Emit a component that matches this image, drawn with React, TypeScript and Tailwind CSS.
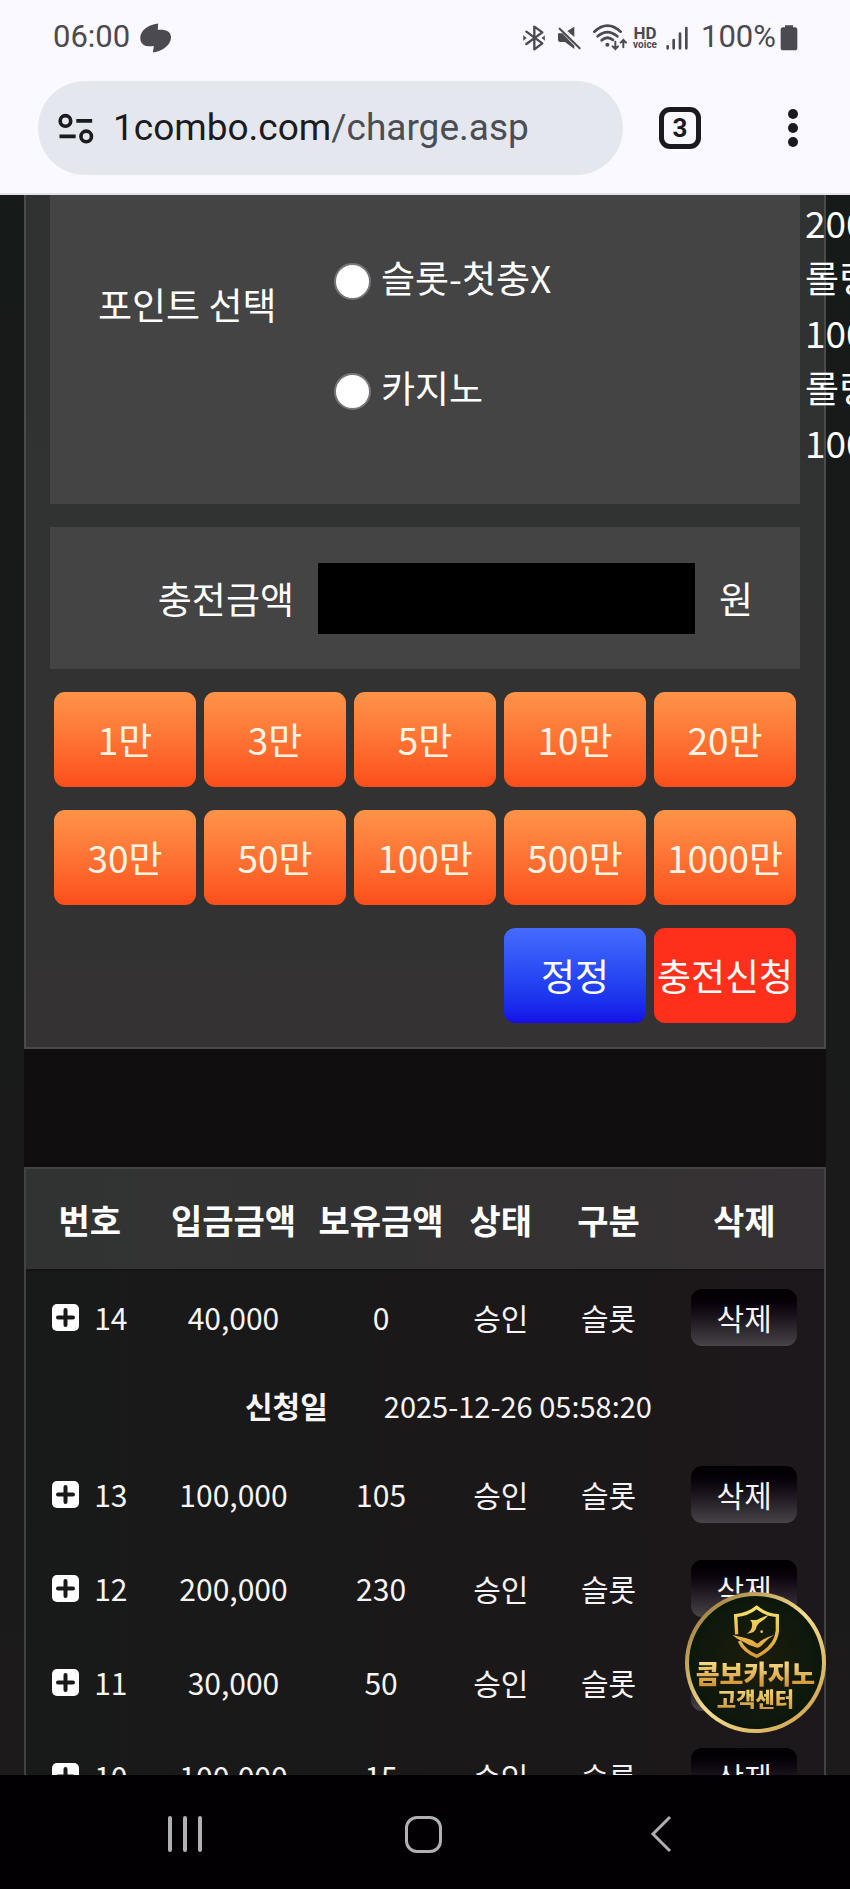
import React from 'react';

const amounts = ['1만', '3만', '5만', '10만', '20만', '30만', '50만', '100만', '500만', '1000만'];

const notes = ['200', '롤링', '100', '롤링', '100'];

const history = [
  { no: 14, deposit: '40,000', balance: '0', date: '2025-12-26 05:58:20' },
  { no: 13, deposit: '100,000', balance: '105' },
  { no: 12, deposit: '200,000', balance: '230' },
  { no: 11, deposit: '30,000', balance: '50' },
  { no: 10, deposit: '100,000', balance: '15' },
];

function StatusBar() {
  return (
    <div className="flex h-[75px] items-center justify-between pl-[53px] pr-[52px] text-[31px] text-[#4b4a50]">
      <div className="flex items-center gap-[10px]">
        <span>06:00</span>
        <svg width="31" height="30" viewBox="419 67 94 90" fill="currentColor">
          <path d="M474 68 C438 72 414 96 421 120 C426 136 441 139 461 136 L458 156 C492 150 514 130 513 108 C512 92 498 85 473 87 Z" />
        </svg>
      </div>
      <div className="flex items-center">
        <svg width="22" height="26" viewBox="70 72 66 78" fill="none" stroke="currentColor" strokeWidth="7" strokeLinejoin="round" strokeLinecap="round">
          <path d="M80 92 L128 127 L104 145 V77 L128 94 L80 129" />
          <path d="M72 105 L80 111 L72 117 Z M135 105 L127 111 L135 117 Z" strokeWidth="2" fill="currentColor" />
        </svg>
        <svg className="ml-3" width="24" height="26" viewBox="170 72 72 78" fill="currentColor">
          <path d="M173 97 H186 L222 134 V144 L194 123 H180 Q173 123 173 117 Z" />
          <path d="M222 77 V108 L201 90 Z" />
          <path d="M178 83 L238 142" stroke="currentColor" strokeWidth="6" strokeLinecap="round" />
        </svg>
        <svg className="ml-3" width="34" height="27" viewBox="276 69 102 81" fill="none" stroke="currentColor" strokeWidth="8" strokeLinecap="round">
          <path d="M280 92 Q319 56 359 92" />
          <path d="M290 106 Q319 81 349 106" />
          <path d="M302 118 Q319 103 336 117" />
          <circle cx="319" cy="131" r="6" fill="currentColor" stroke="none" />
          <path d="M343 122 V143 M335 136 L343 144 L351 136 M367 139 V119 M359 125 L367 117 L375 125" strokeWidth="6" />
        </svg>
        <div className="ml-[6px] flex flex-col items-center font-bold">
          <span className="text-[17px] leading-[14px]">HD</span>
          <span className="text-[10px] leading-[9px]">voice</span>
        </div>
        <svg className="ml-[9px]" width="23" height="24" viewBox="503 73 69 72" stroke="currentColor" strokeWidth="8" strokeLinecap="round">
          <path d="M508 134 V140 M526 115 V140 M545 96 V140 M564 79 V140" />
        </svg>
        <span className="ml-3">100%</span>
        <svg className="ml-1" width="18" height="26" viewBox="838 72 54 78" fill="currentColor">
          <path d="M853 73 H877 V79 H883 Q890 79 890 87 V140 Q890 148 883 148 H847 Q840 148 840 140 V87 Q840 79 847 79 H853 Z" />
        </svg>
      </div>
    </div>
  );
}

function BrowserBar() {
  return (
    <div className="flex items-center pb-[18px] pl-[38px] pr-[52px] pt-[6px]">
      <div className="flex h-[94px] flex-1 items-center gap-[18px] rounded-full bg-[#e4e7ee] pl-[19px]">
        <svg width="38" height="31" viewBox="170 335 114 94" fill="none" stroke="#1a1b20" strokeWidth="11">
          <circle cx="195" cy="359" r="16" />
          <path d="M228 359 H276 M177 406 H226" />
          <circle cx="258" cy="406" r="16" />
        </svg>
        <a href="#charge" className="text-[37px] text-[#1a1b20]">
          1combo.com<span className="text-[#4b4d53]">/charge.asp</span>
        </a>
      </div>
      <button className="ml-9 flex size-[42px] items-center justify-center rounded-[11px] border-[5px] border-[#1a1a20] text-[26px] font-bold text-[#1a1a20]">
        3
      </button>
      <button aria-label="메뉴" className="ml-[87px] flex flex-col gap-[4px]">
        <span className="size-[10px] rounded-full bg-[#1a1a20]" />
        <span className="size-[10px] rounded-full bg-[#1a1a20]" />
        <span className="size-[10px] rounded-full bg-[#1a1a20]" />
      </button>
    </div>
  );
}

function PointSelect() {
  return (
    <div className="flex bg-[#434443] pb-[34px]">
      <div className="w-[284px] pl-12 pt-[82px]">포인트 선택</div>
      <div className="flex flex-1 flex-col gap-[55px] pt-[55px]">
        {['슬롯-첫충X', '카지노'].map((name) => (
          <label key={name} className="flex h-[55px] items-center gap-[10px]">
            <input
              type="radio"
              name="point"
              className="mt-2 size-[37px] appearance-none rounded-full border-2 border-[#767676] bg-white"
            />
            {name}
          </label>
        ))}
      </div>
      {/* rolling notes spill out past the panel edge */}
      <div className="-mr-[5px] ml-[5px] w-0 whitespace-nowrap">
        {notes.map((note, i) => (
          <p key={i}>{note}</p>
        ))}
      </div>
    </div>
  );
}

function ChargeForm() {
  const button = 'h-[95px] rounded-[11px] bg-linear-to-b whitespace-nowrap';
  return (
    <section className="flex flex-col gap-[23px] border-2 border-t-0 border-[#4a4a4b] bg-linear-to-b from-[#2f3231] to-[#343233] px-6 pb-6 text-[37px] leading-[55px] text-white">
      <PointSelect />
      <div className="flex h-[142px] items-center bg-[#434443]">
        <label htmlFor="amount" className="w-[268px] pr-6 text-right">
          충전금액
        </label>
        <input id="amount" type="text" className="h-[71px] min-w-0 flex-1 bg-black px-3" />
        <span className="w-[105px] pl-6">원</span>
      </div>
      <div className="grid grid-cols-5 gap-x-2 gap-y-[23px] px-1">
        {amounts.map((amount) => (
          <button key={amount} className={`${button} from-[#fe9348] to-[#fc4d1b] text-[#fff4e6]`}>
            {amount}
          </button>
        ))}
        <button className={`${button} col-start-4 from-[#456bff] to-[#160be6]`}>정정</button>
        <button className={`${button} bg-[#fe2f1b]`}>충전신청</button>
      </div>
    </section>
  );
}

function History() {
  return (
    <section className="mt-[118px] border-2 border-[#434243] bg-linear-to-r from-[#181a19] via-[#1a1819] to-[#1d181b] text-[30px] text-[#f6f4f5]">
      <table className="w-full table-fixed text-center">
        <colgroup>
          <col className="w-[16%]" />
          <col className="w-[20%]" />
          <col className="w-[17%]" />
          <col className="w-[13%]" />
          <col className="w-[14%]" />
          <col className="w-[20%]" />
        </colgroup>
        <thead>
          <tr className="h-[101px] border-b-2 border-[#141213] bg-linear-to-r from-[#313332] to-[#363134] text-[34px] text-white">
            {['번호', '입금금액', '보유금액', '상태', '구분', '삭제'].map((title) => (
              <th key={title} className="whitespace-nowrap p-0">{title}</th>
            ))}
          </tr>
        </thead>
        <tbody>
          {history.map((row) => (
            <React.Fragment key={row.no}>
              <tr className="h-[94px]">
                <td>
                  <div className="flex items-center justify-center gap-[15px]">
                    <button aria-label="펼치기">
                      <svg width="27" height="27" viewBox="0 0 27 27">
                        <rect width="27" height="27" rx="5" fill="#fff" />
                        <path d="M13.5 6 V21 M6 13.5 H21" stroke="#1a1819" strokeWidth="4" strokeLinecap="round" />
                      </svg>
                    </button>
                    {row.no}
                  </div>
                </td>
                <td>{row.deposit}</td>
                <td>{row.balance}</td>
                <td>승인</td>
                <td>슬롯</td>
                <td>
                  <button className="h-[57px] w-[106px] rounded-[11px] bg-linear-to-b from-[#020003] from-10% to-[#484448] align-middle leading-[57px]">
                    삭제
                  </button>
                </td>
              </tr>
              {row.date && (
                <tr className="h-[83px]">
                  <td colSpan={6}>
                    <div className="flex items-center gap-14 pl-[219px]">
                      <strong>신청일</strong>
                      <span className="text-[29px]">{row.date}</span>
                    </div>
                  </td>
                </tr>
              )}
            </React.Fragment>
          ))}
        </tbody>
      </table>
    </section>
  );
}

function SupportBadge() {
  return (
    <a
      href="#support"
      className="absolute bottom-[42px] right-6 size-[141px] rounded-full bg-linear-to-br from-[#8a6a2c] via-[#f5dc8e] to-[#c99a3e] p-[4px]"
    >
      <div className="flex h-full flex-col items-center rounded-full bg-radial from-[#1d1d0c] to-[#04150c] pt-[9px] font-black">
        <svg width="48" height="54" viewBox="214 136 144 162" fill="none" stroke="url(#gold)" strokeWidth="10">
          <defs>
            <linearGradient id="gold" gradientUnits="userSpaceOnUse" x1="0" y1="140" x2="0" y2="295">
              <stop offset="0" stopColor="#f9e26c" />
              <stop offset="1" stopColor="#d99a35" />
            </linearGradient>
          </defs>
          <path d="M228 224 L225 168 Q262 165 288 143 Q314 165 350 168 L350 214 Q345 262 288 290 Q250 274 236 244" />
          <path d="M215 226 Q240 232 258 236 Q276 240 290 252 Q306 236 340 226 Q322 236 308 252 Q298 264 289 264 Q264 258 244 244 Q228 238 215 226 Z" fill="url(#gold)" stroke="none" />
          <path d="M268 180 Q280 182 290 180 Q302 174 324 166 Q314 178 304 184 Q292 190 288 200 Q286 222 258 222 Q274 212 274 198 Q276 188 268 180 Z" fill="url(#gold)" stroke="none" />
          <circle cx="303" cy="216" r="4" fill="url(#gold)" stroke="none" />
        </svg>
        <span className="whitespace-nowrap bg-linear-to-b from-[#fbe48a] to-[#cf8f2c] bg-clip-text text-[26px] leading-[28px] text-transparent">
          콤보카지노
        </span>
        <span className="whitespace-nowrap bg-linear-to-b from-[#f7dc7c] to-[#d2983a] bg-clip-text text-[21px] leading-[22px] text-transparent">
          고객센터
        </span>
      </div>
    </a>
  );
}

function NavigationBar() {
  return (
    <nav className="grid h-[114px] grid-cols-3 place-items-center bg-[#020003] pl-[66px] pr-[70px] pt-1">
      <button aria-label="최근 앱" className="flex gap-[11px]">
        <span className="h-9 w-1 rounded-full bg-[#b0afb1]" />
        <span className="h-9 w-1 rounded-full bg-[#b0afb1]" />
        <span className="h-9 w-1 rounded-full bg-[#b0afb1]" />
      </button>
      <button aria-label="홈" className="size-[37px] rounded-[12px] border-[3px] border-[#b0afb1]" />
      <button aria-label="뒤로">
        <svg width="22" height="38" viewBox="0 0 22 38" fill="none" stroke="#b0afb1" strokeWidth="3">
          <path d="M20 2 L3 19 L20 36" />
        </svg>
      </button>
    </nav>
  );
}

export default function App() {
  return (
    <div className="flex h-screen flex-col overflow-hidden">
      <header className="border-b-2 border-[#e3e4e9] bg-[#f9f9ff] font-[Roboto,sans-serif]">
        <StatusBar />
        <BrowserBar />
      </header>
      <main className="relative min-h-0 flex-1 overflow-hidden bg-linear-to-b from-[#161a19] to-[#1c1a1b] px-6 font-['Noto_Sans_CJK_KR',sans-serif]">
        <div className="bg-[#100e0f]">
          <ChargeForm />
          <History />
        </div>
        <SupportBadge />
      </main>
      <NavigationBar />
    </div>
  );
}
